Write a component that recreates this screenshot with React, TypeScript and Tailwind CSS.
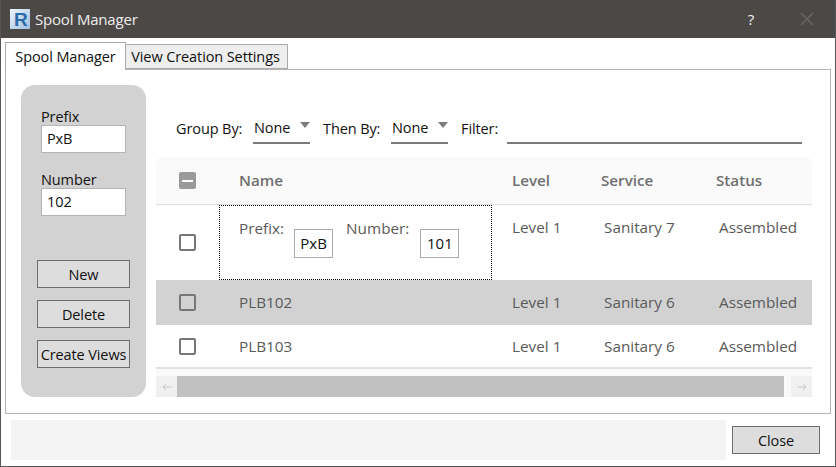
import React from "react";

function CheckBox() {
  return <div className="w-[17px] h-[17px] rounded-[2px] border-2 border-[#777777]" />;
}

function Row({ name, service, shade }: { name: string; service: string; shade?: boolean }) {
  return (
    <div className={`flex items-center text-[#5a5a5a] text-[15.3px] tracking-normal ${shade ? "bg-[#d2d2d2] h-[45px]" : "h-[42px] pt-[1px]"}`}>
      <div className="w-[64px] flex justify-center pr-[1px]">
        <CheckBox />
      </div>
      <div className="w-[19px]" />
      <div className="w-[273px]">{name}</div>
      <div className="w-[92px]">Level 1</div>
      <div className="w-[115px]">{service}</div>
      <div>Assembled</div>
    </div>
  );
}

function Dropdown({ value }: { value: string }) {
  return (
    <div className="w-[57px] h-[30px] border-b-2 border-[#7a7a7a] flex items-center justify-between pl-[1px] pb-[1px] text-[#111111]">
      <span>{value}</span>
      <span className="mb-[5px] w-0 h-0 border-l-[5px] border-r-[5px] border-t-[6px] border-l-transparent border-r-transparent border-t-[#7d7d7d]" />
    </div>
  );
}

function SideButton({ label }: { label: string }) {
  return (
    <button className="w-[93px] h-[28px] pt-[1px] border border-[#6d6d6d] bg-[#dddddd] text-[#111111] flex items-center justify-center">
      {label}
    </button>
  );
}

function SideField({ label, value }: { label: string; value: string }) {
  return (
    <div className="flex flex-col">
      <span className="leading-[16px] text-[#111111]">{label}</span>
      <div className="w-[85px] h-[28px] border border-[#b4b4b4] bg-white pl-[5px] flex items-center text-[#111111]">
        {value}
      </div>
    </div>
  );
}

function SmallBox({ value }: { value: string }) {
  return (
    <div className="w-[39px] h-[29px] border border-[#ababab] bg-white flex items-center justify-center text-[#111111] text-[15px]">
      {value}
    </div>
  );
}

export default function App() {
  return (
    <div className="w-[836px] h-[467px] flex flex-col bg-white border-x border-b border-[#555555] overflow-hidden text-[14.5px] font-['Open_Sans','Noto_Sans',sans-serif] tracking-[-0.1px]">
      {/* title bar */}
      <div className="h-[38px] -mx-px shrink-0 bg-[#4b4846] flex items-center pl-[10px] text-[#f2f2f2]">
        <svg width="20" height="20" viewBox="0 0 20 20" className="shrink-0">
          <defs>
            <linearGradient id="rvt" x1="0" y1="0" x2="1" y2="1">
              <stop offset="0" stopColor="#eef4fb" />
              <stop offset="1" stopColor="#9dbfe0" />
            </linearGradient>
          </defs>
          <rect width="20" height="20" fill="url(#rvt)" />
          <text x="4" y="17" fontSize="19" fontWeight="700" fill="#2a6aa6" fontFamily="Liberation Sans">
            R
          </text>
        </svg>
        <span className="ml-[5px] text-[15px] text-[#ededed] tracking-[-0.2px]">Spool Manager</span>
        <span className="ml-auto mr-[46px] text-[15px] text-[#f5f5f5]">?</span>
        <svg width="14" height="14" viewBox="0 0 14 14" className="mr-[22px]">
          <path d="M1 1 13 13 M13 1 1 13" stroke="#6d6a68" strokeWidth="1.2" fill="none" />
        </svg>
      </div>

      <div className="flex-1 flex flex-col px-[4px] min-h-0">
        {/* tabs */}
        <div className="flex items-end h-[32px] pt-[4px] shrink-0 relative z-10 -mb-px">
          <div className="w-[121px] h-[28px] border border-b-0 border-[#ababab] bg-white flex items-center justify-center text-[#111111]">
            Spool Manager
          </div>
          <div className="w-[162px] h-[25px] mb-px pr-[2px] border border-l-0 border-[#ababab] bg-[#eeeeee] flex items-center justify-center text-[#111111]">
            View Creation Settings
          </div>
        </div>

        {/* tab panel */}
        <div className="h-[345px] shrink-0 border border-[#b4b4b4] flex pl-[15px] pt-[15px] bg-white">
          {/* left panel */}
          <div className="w-[125px] h-[312px] rounded-[14px] bg-[#d2d2d2] flex flex-col pl-[20px] pt-[24px] shrink-0">
            <SideField label="Prefix" value="PxB" />
            <div className="mt-[19px]">
              <SideField label="Number" value="102" />
            </div>
            <div className="mt-[44px] -ml-[4px] flex flex-col gap-[12px]">
              <SideButton label="New" />
              <SideButton label="Delete" />
              <SideButton label="Create Views" />
            </div>
          </div>

          {/* right side */}
          <div className="ml-[10px] w-[656px] flex flex-col">
            <div className="h-[72px] flex items-start pt-[29px] shrink-0 text-[#111111]">
              <span className="ml-[20px] w-[77px] leading-[30px]">Group By:</span>
              <Dropdown value="None" />
              <span className="ml-[13px] w-[68px] leading-[30px]">Then By:</span>
              <Dropdown value="None" />
              <span className="ml-[13px] w-[46px] leading-[30px]">Filter:</span>
              <div className="w-[295px] h-[30px] border-b-2 border-[#7a7a7a]" />
            </div>

            {/* header */}
            <div className="h-[48px] bg-[#fafafa] border-b border-[#dedede] rounded-t-[6px] flex items-center font-semibold text-[15.2px] tracking-normal text-[#6f6f6f] shrink-0">
              <div className="w-[64px] flex justify-center pr-[1px]">
                <div className="w-[17px] h-[17px] rounded-[2px] bg-[#9a9a9a] flex items-center justify-center">
                  <div className="w-[11px] h-[2px] bg-white" />
                </div>
              </div>
              <div className="w-[19px]" />
              <div className="w-[273px]">Name</div>
              <div className="w-[89px]">Level</div>
              <div className="w-[115px]">Service</div>
              <div>Status</div>
            </div>

            {/* first row, being edited */}
            <div className="h-[75px] flex text-[#5a5a5a] text-[15.3px] tracking-normal shrink-0">
              <div className="w-[64px] flex justify-center items-center pr-[1px]">
                <CheckBox />
              </div>
              <div className="w-[273px] -ml-[1px] h-[75px] border border-dotted border-black flex pl-[19px] pt-[12px]">
                <span className="leading-[20px]">Prefix:</span>
                <div className="ml-[10px] mt-[11px]">
                  <SmallBox value="PxB" />
                </div>
                <span className="ml-[13px] leading-[20px]">Number:</span>
                <div className="ml-[11px] mt-[11px]">
                  <SmallBox value="101" />
                </div>
              </div>
              <div className="ml-[20px] w-[92px] pt-[12px] leading-[20px]">Level 1</div>
              <div className="w-[115px] pt-[12px] leading-[20px]">Sanitary 7</div>
              <div className="pt-[12px] leading-[20px]">Assembled</div>
            </div>

            <Row name="PLB102" service="Sanitary 6" shade />
            <Row name="PLB103" service="Sanitary 6" />

            {/* scrollbar */}
            <div className="h-[30px] border-t-2 border-[#e2e2e2] bg-white shrink-0">
              <div className="h-[7px] bg-[#f9f9f9]" />
              <div className="h-[21px] flex bg-[#f9f9f9]">
                <div className="w-[21px] bg-[#f0f0f0] flex items-center justify-center">
                  <svg width="10" height="8" viewBox="0 0 10 8">
                    <path d="M9.5 4H1 M4 1 1 4l3 3" stroke="#c8c8c8" strokeWidth="1" fill="none" />
                  </svg>
                </div>
                <div className="w-[607px] bg-[#c1c1c1]" />
                <div className="w-[7px]" />
                <div className="w-[21px] bg-[#f0f0f0] flex items-center justify-center">
                  <svg width="10" height="8" viewBox="0 0 10 8">
                    <path d="M.5 4H9 M6 1l3 3-3 3" stroke="#c8c8c8" strokeWidth="1" fill="none" />
                  </svg>
                </div>
              </div>
            </div>
          </div>
        </div>

        {/* footer */}
        <div className="flex-1 flex pt-[6px] pl-[6px]">
          <div className="w-[715px] h-[40px] bg-[#f3f3f3]" />
          <button className="ml-[6px] mt-[6px] w-[88px] h-[28px] pt-[1px] border border-[#6d6d6d] bg-[#dddddd] text-[#111111] flex items-center justify-center">
            Close
          </button>
        </div>
      </div>
    </div>
  );
}
